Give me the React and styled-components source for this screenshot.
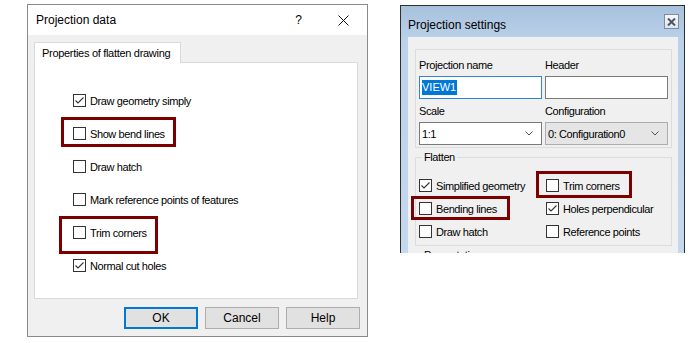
import { styled, createGlobalStyle } from "styled-components";

// Réglages globaux de la page
const GlobalStyle = createGlobalStyle`
  html, body {
    margin: 0;
    background: #fff;
  }
  body {
    font-family: "Liberation Sans", Arial, sans-serif;
    color: #000;
  }
`;

// Cases de la première boîte (Projection data)
const leftItems = [
  { label: "Draw geometry simply", checked: true },
  { label: "Show bend lines", mark: { x: -12, y: 0, w: 115, h: 30 } },
  { label: "Draw hatch" },
  { label: "Mark reference points of features" },
  { label: "Trim corners", mark: { x: -14, y: 0, w: 99, h: 38 } },
  { label: "Normal cut holes", checked: true },
];

// Cases du groupe "Flatten" (deux colonnes, ligne par ligne)
const flattenItems = [
  { label: "Simplified geometry", checked: true },
  { label: "Trim corners", mark: { x: -10, y: -3, w: 96, h: 27 } },
  { label: "Bending lines", mark: { x: -8, y: -1, w: 99, h: 24 } },
  { label: "Holes perpendicular", checked: true },
  { label: "Draw hatch" },
  { label: "Reference points" },
];

function CheckBox({ checked }) {
  return (
    <Box>
      {checked && (
        <svg width="11" height="11" viewBox="0 0 11 11">
          <path d="M1.5 5.5 L4 8 L9.5 2.5" fill="none" stroke="#333" strokeWidth="1.1" />
        </svg>
      )}
    </Box>
  );
}

function Mark({ mark }) {
  if (!mark) return null;
  return <Highlight $x={mark.x} $y={mark.y} $w={mark.w} $h={mark.h} />;
}

export default function App() {
  return (
    <>
      <GlobalStyle />
      <Page>
        {/* Boîte de gauche : style Windows 10 */}
        <LeftDialog>
          <TitleBar>
            <Title>Projection data</Title>
            <HelpGlyph>?</HelpGlyph>
            <CloseX width="11" height="11" viewBox="0 0 11 11">
              <path d="M0.5 0.5 L10.5 10.5 M10.5 0.5 L0.5 10.5" stroke="#111" strokeWidth="1" />
            </CloseX>
          </TitleBar>
          <DialogBody>
            <Tab>Properties of flatten drawing</Tab>
            <TabPanel>
              {leftItems.map((item) => (
                <LeftRow key={item.label}>
                  <CheckBox checked={item.checked} />
                  <span>{item.label}</span>
                  <Mark mark={item.mark} />
                </LeftRow>
              ))}
            </TabPanel>
            <ButtonRow>
              <Button $primary>OK</Button>
              <Button>Cancel</Button>
              <Button>Help</Button>
            </ButtonRow>
          </DialogBody>
        </LeftDialog>

        {/* Boîte de droite : style Windows 7, coupée en bas */}
        <RightDialog>
          <RTitleBar>
            <RTitle>Projection settings</RTitle>
            <CloseBox>
              <svg width="9" height="8" viewBox="0 0 9 8">
                <path d="M1 0.5 L8 7.5 M8 0.5 L1 7.5" stroke="#4b5563" strokeWidth="2" />
              </svg>
            </CloseBox>
          </RTitleBar>
          <RContent>
            <TopGroup>
              <Field>
                <FieldLabel>Projection name</FieldLabel>
                <TextInput $focused>
                  <Selected>VIEW1</Selected>
                </TextInput>
              </Field>
              <Field>
                <FieldLabel>Header</FieldLabel>
                <TextInput />
              </Field>
              <Field>
                <FieldLabel>Scale</FieldLabel>
                <Select>
                  <span>1:1</span>
                  <Chevron width="8" height="5" viewBox="0 0 8 5">
                    <path d="M0.5 0.5 L4 4 L7.5 0.5" fill="none" stroke="#555" strokeWidth="1" />
                  </Chevron>
                </Select>
              </Field>
              <Field>
                <FieldLabel>Configuration</FieldLabel>
                <Select $disabled>
                  <span>0: Configuration0</span>
                  <Chevron width="8" height="5" viewBox="0 0 8 5">
                    <path d="M0.5 0.5 L4 4 L7.5 0.5" fill="none" stroke="#555" strokeWidth="1" />
                  </Chevron>
                </Select>
              </Field>
            </TopGroup>

            <GroupBox>
              <Legend>Flatten</Legend>
              <CheckGrid>
                {flattenItems.map((item) => (
                  <RightRow key={item.label}>
                    <CheckBox checked={item.checked} />
                    <span>{item.label}</span>
                    <Mark mark={item.mark} />
                  </RightRow>
                ))}
              </CheckGrid>
            </GroupBox>

            <GroupBox>
              <Legend>Presentation</Legend>
              <CheckGrid />
            </GroupBox>
          </RContent>
        </RightDialog>
      </Page>
    </>
  );
}

// ---------- Styles ----------

const Page = styled.div`
  width: 692px;
  height: 343px;
  box-sizing: border-box;
  padding: 4px 0 0 27px;
  display: flex;
  align-items: flex-start;
  gap: 32px;
  overflow: hidden;
`;

// Case à cocher commune
const Box = styled.span`
  width: 13px;
  height: 13px;
  box-sizing: border-box;
  border: 1px solid #333;
  background: #fff;
  display: inline-flex;
  flex-shrink: 0;
`;

// Cadre rouge d'annotation posé par-dessus une ligne
const Highlight = styled.span`
  position: absolute;
  left: ${(p) => p.$x}px;
  top: ${(p) => p.$y}px;
  width: ${(p) => p.$w}px;
  height: ${(p) => p.$h}px;
  box-sizing: border-box;
  border: 3px solid #7d0000;
  pointer-events: none;
`;

// --- Boîte de gauche ---

const LeftDialog = styled.div`
  width: 341px;
  height: 333px;
  box-sizing: border-box;
  border: 1px solid #8a8a8a;
  background: #f0f0f0;
  display: flex;
  flex-direction: column;
`;

const TitleBar = styled.div`
  height: 30px;
  flex-shrink: 0;
  background: #fff;
  display: flex;
  align-items: center;
  padding-left: 8px;
  font-size: 12px;
`;

const Title = styled.span`
  flex: 1;
`;

const HelpGlyph = styled.span`
  font-size: 12px;
  margin-right: 36px;
`;

const CloseX = styled.svg`
  margin-right: 18px;
`;

const DialogBody = styled.div`
  flex: 1;
  padding: 7px 7px 7px 6px;
  display: flex;
  flex-direction: column;
`;

const Tab = styled.div`
  position: relative;
  z-index: 1;
  width: 147px;
  height: 21px;
  box-sizing: border-box;
  border: 1px solid #d9d9d9;
  border-bottom: none;
  background: #fff;
  padding-left: 7px;
  font-size: 11px;
  letter-spacing: -0.3px;
  line-height: 20px;
  white-space: nowrap;
`;

const TabPanel = styled.div`
  width: 324px;
  height: 237px;
  margin-top: -1px;
  box-sizing: border-box;
  border: 1px solid #d9d9d9;
  background: #fff;
  padding: 21px 0 0 38px;
  display: flex;
  flex-direction: column;
`;

const LeftRow = styled.div`
  position: relative;
  height: 33px;
  display: flex;
  align-items: center;
  gap: 4px;
  font-size: 11px;
  letter-spacing: -0.4px;
  white-space: nowrap;
`;

const ButtonRow = styled.div`
  display: flex;
  justify-content: flex-end;
  gap: 7px;
  margin-top: 8px;
`;

const Button = styled.div`
  width: 74px;
  height: 22px;
  box-sizing: border-box;
  border: ${(p) => (p.$primary ? "2px solid #0078d7" : "1px solid #adadad")};
  background: #e1e1e1;
  display: flex;
  align-items: center;
  justify-content: center;
  font-size: 12px;
`;

// --- Boîte de droite ---

const RightDialog = styled.div`
  width: 285px;
  height: 248px;
  margin-top: 1px;
  box-sizing: border-box;
  border: 1px solid #2e2e2e;
  border-bottom: none;
  background: linear-gradient(180deg, #a7c1dd 0, #bcd2ea 36px, #c4d8ee 100%);
  padding: 0 6px 0 7px;
  display: flex;
  flex-direction: column;
  overflow: hidden;
`;

const RTitleBar = styled.div`
  height: 31px;
  flex-shrink: 0;
  display: flex;
  align-items: flex-start;
  justify-content: space-between;
`;

const RTitle = styled.span`
  margin-top: 12px;
  font-size: 12px;
  line-height: 14px;
`;

const CloseBox = styled.div`
  width: 15px;
  height: 15px;
  margin-top: 8px;
  margin-right: -1px;
  box-sizing: border-box;
  border: 1px solid #7f8c9c;
  background: linear-gradient(180deg, #f5f8fb, #dde5ef);
  display: flex;
  align-items: center;
  justify-content: center;
`;

const RContent = styled.div`
  flex: 1;
  background: #f0f0f0;
  padding: 12px 6px 0 7px;
  display: flex;
  flex-direction: column;
  font-size: 11px;
  letter-spacing: -0.4px;
`;

const TopGroup = styled.div`
  border: 1px solid #dcdcdc;
  padding: 8px 3px 2px;
  display: grid;
  grid-template-columns: 123px 123px;
  column-gap: 3px;
  row-gap: 5px;
`;

const Field = styled.div`
  display: flex;
  flex-direction: column;
  gap: 4px;
`;

const FieldLabel = styled.span`
  line-height: 14px;
  white-space: nowrap;
`;

const TextInput = styled.div`
  height: 23px;
  box-sizing: border-box;
  border: 1px solid ${(p) => (p.$focused ? "#2f86d6" : "#7a7a7a")};
  background: #fff;
  display: flex;
  align-items: center;
  padding-left: 2px;
  letter-spacing: 0;
`;

const Selected = styled.span`
  background: #0078d7;
  color: #fff;
  line-height: 15px;
  padding-right: 1px;
`;

const Select = styled.div`
  height: 23px;
  box-sizing: border-box;
  border: 1px solid ${(p) => (p.$disabled ? "#adadad" : "#7a7a7a")};
  background: ${(p) => (p.$disabled ? "#e5e5e5" : "#fff")};
  display: flex;
  align-items: center;
  justify-content: space-between;
  padding: 0 8px 0 2px;
  white-space: nowrap;
`;

const Chevron = styled.svg`
  flex-shrink: 0;
`;

const GroupBox = styled.fieldset`
  margin: 2px 0 0;
  padding: 10px 3px 2px;
  border: 1px solid #dcdcdc;
  min-width: 0;
`;

const Legend = styled.legend`
  margin-left: 3px;
  padding: 0 2px;
  line-height: 14px;
  font-size: 11px;
`;

const CheckGrid = styled.div`
  display: grid;
  grid-template-columns: 127px 1fr;
  grid-auto-rows: 23px;
`;

const RightRow = styled.div`
  position: relative;
  display: flex;
  align-items: center;
  gap: 4px;
  white-space: nowrap;
`;
